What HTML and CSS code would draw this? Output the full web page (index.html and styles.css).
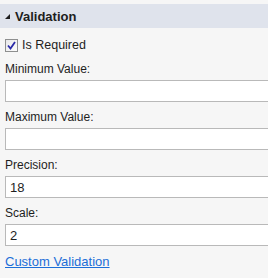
FILE: index.html
```html
<!DOCTYPE html>
<html lang="en">
<head>
    <meta charset="UTF-8">
    <title>Validation</title>
    <link rel="stylesheet" href="styles.css">
</head>
<body>
    <div class="panel">
        <div class="panel-header">
            <svg class="toggle" width="5" height="5" viewBox="0 0 5 5"><polygon points="5,0 5,5 0,5" fill="#1e1e1e"/></svg>
            <span class="panel-title">Validation</span>
        </div>

        <div class="panel-body">
            <label class="check-row">
                <span class="checkbox">
                    <svg width="9" height="9" viewBox="0 0 9 9"><path d="M1 4.5 L3.5 7.5 L8 1" stroke="#2a2aa8" stroke-width="1.8" fill="none"/></svg>
                </span>
                Is Required
            </label>

            <div class="field">
                <div class="field-label">Minimum Value:</div>
                <input class="field-input" type="text" value="">
            </div>
            <div class="field">
                <div class="field-label">Maximum Value:</div>
                <input class="field-input" type="text" value="">
            </div>
            <div class="field">
                <div class="field-label">Precision:</div>
                <input class="field-input" type="text" value="18">
            </div>
            <div class="field">
                <div class="field-label">Scale:</div>
                <input class="field-input" type="text" value="2">
            </div>

            <a href="#" class="custom-link">Custom Validation</a>
        </div>
    </div>
</body>
</html>
```

FILE: styles.css
```css
* {
    margin: 0;
    padding: 0;
    box-sizing: border-box;
}

body {
    font-family: "Liberation Sans", Arial, sans-serif;
    font-size: 12px;
    color: #1e1e1e;
    background: #f6f6f6;
}

.panel {
    padding-top: 4px;
}

.panel-header {
    height: 24px;
    background: #dfe3ec;
    display: flex;
    align-items: center;
    padding-left: 5px;
}

.toggle {
    margin-right: 5px;
    margin-top: 1px;
}

.panel-title {
    font-size: 13px;
    font-weight: bold;
}

.panel-body {
    padding: 8px 0 0 5px;
}

.check-row {
    display: flex;
    align-items: center;
    height: 18px;
    margin-bottom: 6px;
    font-size: 12.5px;
}

.checkbox {
    width: 13px;
    height: 13px;
    border: 1px solid #8e8f8f;
    background: linear-gradient(135deg, #e8e8ea, #fcfcfc);
    display: flex;
    align-items: center;
    justify-content: center;
    margin-right: 4px;
}

.field {
    margin-bottom: 6px;
}

.field-label {
    height: 18px;
    line-height: 19px;
    margin-bottom: 2px;
}

.field-input {
    display: block;
    width: 100%;
    height: 22px;
    border: 1px solid #b9b9b9;
    border-right: none;
    background: #fff;
    font-family: inherit;
    font-size: 13px;
    color: #1e1e1e;
    padding: 0 4px;
    outline: none;
}

.custom-link {
    display: inline-block;
    line-height: 19px;
    font-size: 13px;
    color: #1c6ed8;
    text-decoration: underline;
}
```
